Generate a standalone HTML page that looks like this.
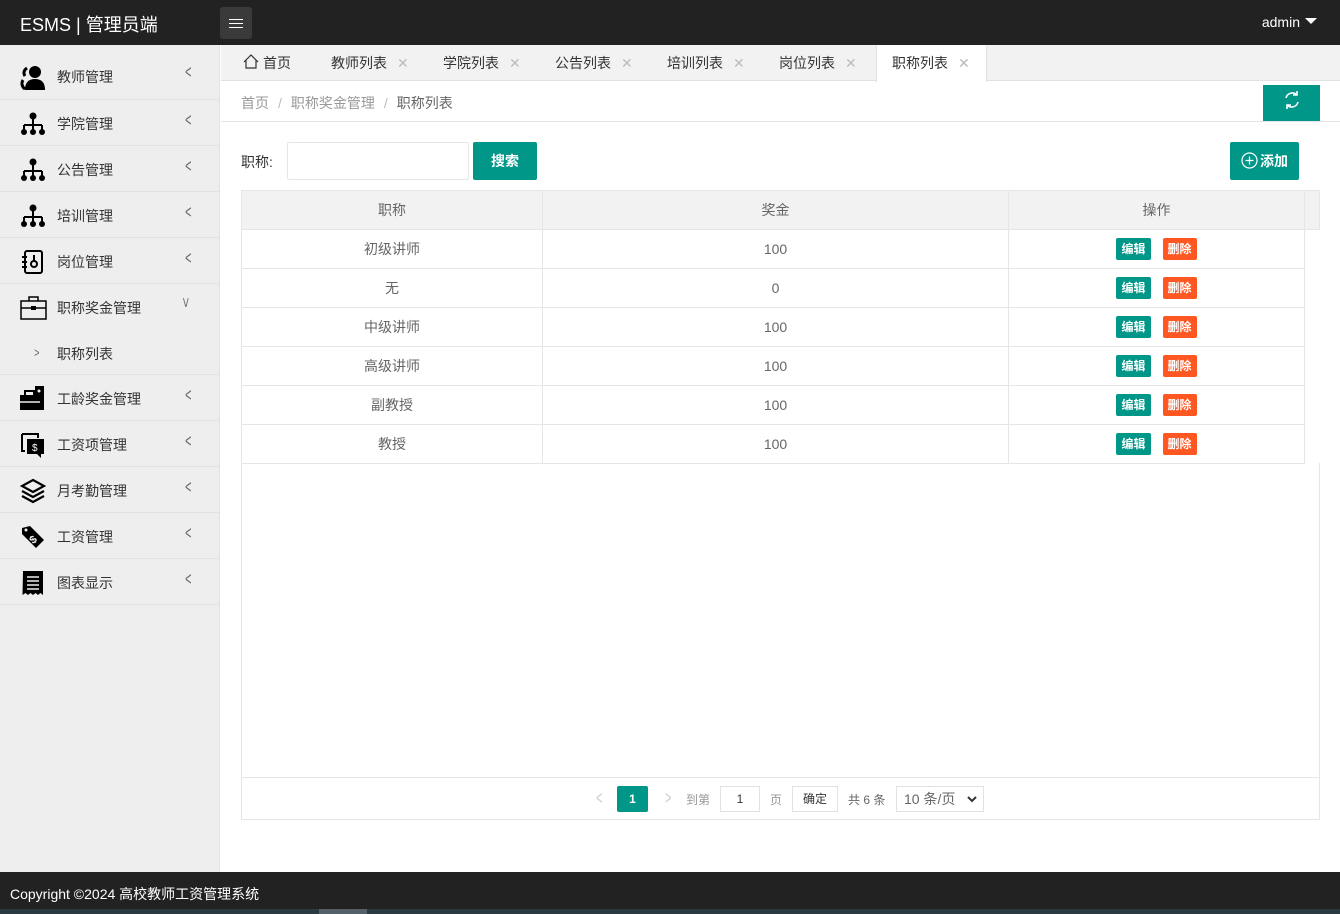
<!DOCTYPE html>
<html><head><meta charset="utf-8"><style>
*{margin:0;padding:0;box-sizing:border-box}
body{width:1340px;height:914px;overflow:hidden;font-family:"Liberation Sans","Noto Sans CJK SC",sans-serif;font-size:14px;color:#333;background:#fff;position:relative}
.hd{position:absolute;left:0;top:0;width:1340px;height:45px;background:#222}
.logo{position:absolute;left:20px;top:11px;color:#fff;font-size:18px}
.menu{position:absolute;left:220px;top:7px;width:32px;height:32px;background:#3a3a3a;border-radius:3px}
.menu i{position:absolute;left:9px;width:14px;height:1px;background:#fff}
.admin{position:absolute;right:40px;top:14px;color:#fff;font-size:14px}
.admin:after{content:"";position:absolute;right:-17px;top:4px;border:6px solid transparent;border-top:6px solid #fff;border-bottom:0}
.sb{position:absolute;left:0;top:45px;width:220px;height:827px;background:#eee;border-right:1px solid #e2e2e2}
.it{position:relative;height:46px;border-bottom:1px solid #e2e2e2}
.it span{position:absolute;left:57px;top:14px;font-size:14px;color:#333}
.it .ar{position:absolute;left:183px;top:10px;color:#666;font-size:18px;font-style:normal;transform:scaleX(.6)}
.it svg{position:absolute;left:20px;top:11px}
.tabs{position:absolute;left:221px;top:45px;width:1119px;height:36px;background:#f2f2f2;border-bottom:1px solid #e2e2e2}
.tab{position:absolute;top:0;height:36px;line-height:36px;font-size:14px;color:#333}
.tab b{font-weight:normal;color:#bbb;margin-left:10px;font-size:14px}
.bc{position:absolute;left:241px;top:93px;font-size:14px;color:#999}
.bc em{font-style:normal;margin:0 9px;color:#bbb}
.bl{position:absolute;left:221px;top:121px;width:1119px;height:1px;background:#e6e6e6}
.btn{position:absolute;background:#009688;color:#fff;border-radius:2px;text-align:center}
table{position:absolute;left:241px;top:190px;width:1079px;border-collapse:collapse}
td,th{border:1px solid #e6e6e6;height:39px;text-align:center;font-weight:normal;color:#666;font-size:14px}
th{background:#f2f2f2}
.e,.d{display:inline-block;font-size:12px;color:#fff;padding:0 5px;height:22px;line-height:22px;border-radius:2px;margin:0 6px;font-weight:bold}
.e{background:#009688}.d{background:#FF5722}
.tbox{position:absolute;left:241px;top:463px;width:1079px;height:357px;border:1px solid #e6e6e6;border-top:0}
.pg{position:absolute;left:0;top:314px;width:1077px;height:1px;background:#e6e6e6}
.ft{position:absolute;left:0;top:872px;width:1340px;height:37px;background:#222;color:#fff;font-size:14px;padding:12px 10px}
.sc{position:absolute;left:0;top:909px;width:1340px;height:5px;background:#2b3a40}
</style></head><body>
<div class="hd"><div class="logo">ESMS | 管理员端</div>
<div class="menu"><i style="top:12px"></i><i style="top:16px"></i><i style="top:20px"></i></div>
<div class="admin">admin</div></div>
<div class="sb">
<div class="it" style="height:55px"><svg width="26" height="26" viewBox="0 0 26 26" style="top:19px"><circle cx="15" cy="8" r="6"/><path d="M5 26c0-8 4-11 10-11s10 3 10 11z"/><path d="M7 4c-3 2-4 5-2 8M3 16c-2 3-1 7 2 9" stroke="#000" stroke-width="3" fill="none"/></svg><span style="top:22px">教师管理</span><i class="ar" style="top:17px">&lt;</i></div>
<div class="it"><svg width="26" height="26" viewBox="0 0 26 26"><circle cx="13" cy="5" r="3.5"/><path d="M13 8v6M4 14h18M4 14v5M13 14v5M22 14v5" stroke="#000" stroke-width="2" fill="none"/><circle cx="4" cy="21" r="3"/><circle cx="13" cy="21" r="3"/><circle cx="22" cy="21" r="3"/></svg><span>学院管理</span><i class="ar">&lt;</i></div>
<div class="it"><svg width="26" height="26" viewBox="0 0 26 26"><circle cx="13" cy="5" r="3.5"/><path d="M13 8v6M4 14h18M4 14v5M13 14v5M22 14v5" stroke="#000" stroke-width="2" fill="none"/><circle cx="4" cy="21" r="3"/><circle cx="13" cy="21" r="3"/><circle cx="22" cy="21" r="3"/></svg><span>公告管理</span><i class="ar">&lt;</i></div>
<div class="it"><svg width="26" height="26" viewBox="0 0 26 26"><circle cx="13" cy="5" r="3.5"/><path d="M13 8v6M4 14h18M4 14v5M13 14v5M22 14v5" stroke="#000" stroke-width="2" fill="none"/><circle cx="4" cy="21" r="3"/><circle cx="13" cy="21" r="3"/><circle cx="22" cy="21" r="3"/></svg><span>培训管理</span><i class="ar">&lt;</i></div>
<div class="it"><svg width="26" height="26" viewBox="0 0 26 26"><rect x="5" y="2" width="17" height="22" rx="2" fill="none" stroke="#000" stroke-width="2"/><path d="M2 8h5M2 13h5M2 18h5" stroke="#000" stroke-width="2"/><circle cx="14" cy="15" r="3" fill="none" stroke="#000" stroke-width="2"/><path d="M14 6v6" stroke="#000" stroke-width="2"/></svg><span>岗位管理</span><i class="ar">&lt;</i></div>
<div class="it" style="height:91px"><svg width="28" height="26" viewBox="0 0 28 26"><rect x="1" y="6" width="25" height="18" fill="none" stroke="#000" stroke-width="1.5"/><path d="M9 6V2h9v4M1 13h25" stroke="#000" stroke-width="1.5" fill="none"/><rect x="11" y="11" width="5" height="4"/></svg><span>职称奖金管理</span><i class="ar" style="transform:rotate(-90deg) scaleY(.6);left:181px;top:8px">&lt;</i>
<i style="position:absolute;left:33px;top:61px;font-style:normal;color:#666;font-size:13px;transform:scaleX(.7)">&gt;</i><span style="top:60px">职称列表</span></div>
<div class="it"><svg width="26" height="26" viewBox="0 0 26 26"><rect x="15" y="0" width="9" height="24"/><rect x="0" y="9" width="20" height="15"/><path d="M5 9V5h9v4" stroke="#000" stroke-width="2" fill="none"/><path d="M0 16h20" stroke="#eee" stroke-width="1.5"/><circle cx="19" cy="5" r="1.5" fill="#eee"/></svg><span>工龄奖金管理</span><i class="ar">&lt;</i></div>
<div class="it"><svg width="26" height="26" viewBox="0 0 26 26"><path d="M2 2h16v4M2 2v17h3" stroke="#000" stroke-width="2" fill="none"/><path d="M7 7h17v15h-3v4l-4-4H7z"/><text x="12" y="19" fill="#fff" font-size="10" font-family="Liberation Sans">$</text></svg><span>工资项管理</span><i class="ar">&lt;</i></div>
<div class="it"><svg width="26" height="26" viewBox="0 0 26 26"><path d="M13 2L24 8 13 14 2 8z" fill="none" stroke="#000" stroke-width="2.2"/><path d="M2 13l11 6 11-6M2 18l11 6 11-6" fill="none" stroke="#000" stroke-width="2.2"/></svg><span>月考勤管理</span><i class="ar">&lt;</i></div>
<div class="it"><svg width="26" height="26" viewBox="0 0 26 26"><path d="M2 4l8-2 14 14-8 8L2 10z"/><circle cx="6" cy="6" r="1.5" fill="#eee"/><text x="9" y="19" fill="#eee" font-size="11" font-weight="bold" transform="rotate(-40 13 14)" font-family="Liberation Sans">$</text></svg><span>工资管理</span><i class="ar">&lt;</i></div>
<div class="it"><svg width="26" height="26" viewBox="0 0 26 26"><path d="M3 1h20v24l-2.5-2-2.5 2-2.5-2-2.5 2-2.5-2-2.5 2-2.5-2-3 2z"/><path d="M7 7h12M7 11h12M7 15h12M7 19h12" stroke="#eee" stroke-width="1.6"/></svg><span>图表显示</span><i class="ar">&lt;</i></div>
</div>
<div class="tabs">
<div class="tab" style="left:22px"><svg width="16" height="15" viewBox="0 0 16 15" style="vertical-align:-1px;margin-right:4px"><path d="M1 8L8 1l7 7M3 6v8h10V6" fill="none" stroke="#333" stroke-width="1.2"/></svg>首页</div>
<div class="tab" style="left:110px">教师列表<b>✕</b></div>
<div class="tab" style="left:222px">学院列表<b>✕</b></div>
<div class="tab" style="left:334px">公告列表<b>✕</b></div>
<div class="tab" style="left:446px">培训列表<b>✕</b></div>
<div class="tab" style="left:558px">岗位列表<b>✕</b></div>
<div class="tab" style="left:655px;width:111px;background:#fff;height:37px;padding-left:15px;border-right:1px solid #e2e2e2;border-left:1px solid #e2e2e2">职称列表<b>✕</b></div>
</div>
<div class="bc">首页<em>/</em>职称奖金管理<em>/</em><span style="color:#666">职称列表</span></div>
<div class="btn" style="left:1263px;top:85px;width:57px;height:36px;border-radius:0"><svg width="20" height="20" viewBox="0 0 20 20" style="margin-top:5px"><path d="M4 8a6.5 6.5 0 0 1 11-3M16 12a6.5 6.5 0 0 1-11 3" fill="none" stroke="#fff" stroke-width="1.6"/><path d="M15 1v4h-4M5 19v-4h4" fill="none" stroke="#fff" stroke-width="1.6"/></svg></div>
<div class="bl"></div>
<div style="position:absolute;left:241px;top:152px;font-size:14px;color:#333">职称:</div>
<div style="position:absolute;left:287px;top:142px;width:182px;height:38px;border:1px solid #e6e6e6;border-radius:2px"></div>
<div class="btn" style="left:473px;top:142px;width:64px;height:38px;line-height:38px;font-size:14px;font-weight:bold">搜索</div>
<div class="btn" style="left:1230px;top:142px;width:69px;height:38px;line-height:38px;font-size:14px;font-weight:bold"><svg width="17" height="17" viewBox="0 0 17 17" style="vertical-align:-3px;margin-right:2px"><circle cx="8.5" cy="8.5" r="7.5" fill="none" stroke="#fff" stroke-width="1.2"/><path d="M8.5 4.5v8M4.5 8.5h8" stroke="#fff" stroke-width="1.2"/></svg>添加</div>
<table>
<tr><th style="width:301px">职称</th><th style="width:466px">奖金</th><th style="width:296px">操作</th><th style="background:#f2f2f2"></th></tr>
<tr><td>初级讲师</td><td>100</td><td><span class="e">编辑</span><span class="d">删除</span></td><td style="border:0;border-left:1px solid #e6e6e6"></td></tr>
<tr><td>无</td><td>0</td><td><span class="e">编辑</span><span class="d">删除</span></td><td style="border:0;border-left:1px solid #e6e6e6"></td></tr>
<tr><td>中级讲师</td><td>100</td><td><span class="e">编辑</span><span class="d">删除</span></td><td style="border:0;border-left:1px solid #e6e6e6"></td></tr>
<tr><td>高级讲师</td><td>100</td><td><span class="e">编辑</span><span class="d">删除</span></td><td style="border:0;border-left:1px solid #e6e6e6"></td></tr>
<tr><td>副教授</td><td>100</td><td><span class="e">编辑</span><span class="d">删除</span></td><td style="border:0;border-left:1px solid #e6e6e6"></td></tr>
<tr><td>教授</td><td>100</td><td><span class="e">编辑</span><span class="d">删除</span></td><td style="border:0;border-left:1px solid #e6e6e6"></td></tr>
</table>
<div class="tbox"><div class="pg"></div></div>
<div style="position:absolute;left:594px;top:788px;color:#ccc;font-size:18px;transform:scaleX(.6)">&lt;</div>
<div class="btn" style="left:617px;top:786px;width:31px;height:26px;line-height:26px;font-size:12px;font-weight:bold">1</div>
<div style="position:absolute;left:663px;top:788px;color:#ccc;font-size:18px;transform:scaleX(.6)">&gt;</div>
<div style="position:absolute;left:686px;top:791px;color:#999;font-size:12px">到第</div>
<div style="position:absolute;left:720px;top:786px;width:40px;height:26px;border:1px solid #e2e2e2;text-align:center;line-height:24px;font-size:12px">1</div>
<div style="position:absolute;left:770px;top:791px;color:#999;font-size:12px">页</div>
<div style="position:absolute;left:792px;top:786px;width:46px;height:26px;border:1px solid #e2e2e2;text-align:center;line-height:24px;font-size:12px;color:#333">确定</div>
<div style="position:absolute;left:848px;top:791px;color:#666;font-size:12px">共 6 条</div>
<div style="position:absolute;left:896px;top:786px;width:88px;height:26px;border:1px solid #e2e2e2;line-height:24px;font-size:14px;color:#666;padding-left:7px">10 条/页<svg width="10" height="8" viewBox="0 0 10 8" style="position:absolute;right:6px;top:9px"><path d="M1 1l4 4 4-4" fill="none" stroke="#333" stroke-width="2"/></svg></div>
<div class="ft">Copyright ©2024 高校教师工资管理系统</div>
<div class="sc"><div style="position:absolute;left:319px;top:0;width:48px;height:5px;background:#55616a"></div></div>
</body></html>
